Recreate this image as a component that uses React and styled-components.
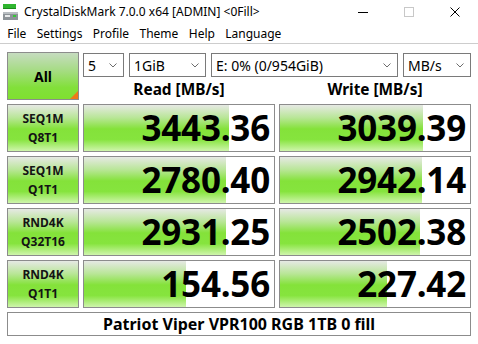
import React from "react"
import styled, { createGlobalStyle } from "styled-components"

const GlobalStyle = createGlobalStyle`
  html, body {
    margin: 0;
    padding: 0;
    background: #fff;
  }
  body {
    font-family: "Noto Sans", "Open Sans", sans-serif;
    color: #000;
  }
`

const Window = styled.div`
  width: 478px;
  height: 344px;
  background: #fff;
  overflow: hidden;
`
const TitleBar = styled.div`
  display: flex;
  align-items: center;
  height: 23px;
  padding-left: 3px;
  font-size: 12px;
`
const Title = styled.span`
  margin-left: 4px;
  white-space: nowrap;
`
const Controls = styled.div`
  display: flex;
  height: 100%;
  margin-left: auto;
`
const ControlButton = styled.div`
  display: flex;
  align-items: center;
  justify-content: center;
  width: 46px;
  height: 100%;
`
const MenuBar = styled.div`
  display: flex;
  align-items: center;
  height: 20px;
  padding-left: 2px;
  font-size: 12px;
  border-bottom: 1px solid #cdcdcd;
`
const MenuItem = styled.span`
  padding: 0 5.2px;
`
const Main = styled.div`
  display: grid;
  grid-template-columns: 72px 192px 192px;
  grid-template-rows: 48px repeat(4, 48px) 24px;
  gap: 4px;
  padding: 8px 7px 0;
`
const greenFace = `linear-gradient(to bottom, #e6e9e4 0%, #b8e696 28%, #84e23a 52%, #86e43e 75%, #cff5ac 100%)`

const AllButton = styled.div`
  display: flex;
  align-items: center;
  justify-content: center;
  position: relative;
  box-sizing: border-box;
  border: 1px solid #8c8c8c;
  background: linear-gradient(to bottom, #c6dcc0 0%, #a4dc80 40%, #82e03a 75%, #7fe030 100%);
  font-weight: 700;
  font-size: 14px;
  overflow: hidden;

  &::after {
    content: "";
    position: absolute;
    right: 0;
    bottom: 0;
    border-style: solid;
    border-width: 0 0 8px 8px;
    border-color: transparent transparent #f07818 transparent;
  }
`
const TopPanel = styled.div`
  grid-column: 2 / 4;
  display: flex;
  flex-direction: column;
`
const ComboRow = styled.div`
  display: grid;
  grid-template-columns: 41px 77px 187px 68px;
  justify-content: space-between;
  height: 24px;
  margin-top: 1px;
`
const Combo = styled.div`
  display: flex;
  align-items: center;
  box-sizing: border-box;
  border: 1px solid #7a7a7a;
  padding: 0 6px 0 4px;
  font-size: 14px;
  background: #fff;
`
const ComboText = styled.span`
  flex: 1;
  white-space: nowrap;
`
const Headers = styled.div`
  display: grid;
  grid-template-columns: 192px 192px;
  gap: 4px;
  flex: 1;
`
const Header = styled.div`
  display: flex;
  align-items: flex-end;
  justify-content: center;
  font-weight: 700;
  font-size: 15.4px;
  line-height: 20px;
`
const Label = styled.div`
  display: flex;
  flex-direction: column;
  align-items: center;
  justify-content: center;
  box-sizing: border-box;
  border: 1px solid #8c8c8c;
  background: ${greenFace};
  font-weight: 700;
  font-size: 12px;
  line-height: 19px;
  color: #141414;
`
const Score = styled.div`
  display: flex;
  align-items: center;
  justify-content: flex-end;
  box-sizing: border-box;
  border: 1px solid #8c8c8c;
  padding-right: 4px;
  background-color: #fff;
  background-image: ${greenFace};
  background-repeat: no-repeat;
  font-weight: 700;
  font-size: 35px;
  line-height: 46px;
  letter-spacing: -0.2px;
`
const Comment = styled.div`
  grid-column: 1 / 4;
  display: flex;
  align-items: center;
  justify-content: center;
  box-sizing: border-box;
  border: 1px solid #8c8c8c;
  font-weight: 700;
  font-size: 16px;
`

const Chevron = () => (
  <svg width="8" height="5" viewBox="0 0 8 5">
    <polyline points="0.5,0.5 4,4 7.5,0.5" fill="none" stroke="#6d6d6d" strokeWidth="1" />
  </svg>
)

const AppIcon = () => (
  <svg width="17" height="18" viewBox="0 0 17 18">
    <rect x="0" y="1" width="13" height="5" fill="#2fb52f" />
    <rect x="0" y="5" width="13" height="1" fill="#1d8a1d" />
    <rect x="0" y="9" width="15" height="8" fill="#8d9398" />
    <rect x="0" y="9" width="15" height="2" fill="#b9bec2" />
    <rect x="2" y="12" width="5" height="2" fill="#e8eaeb" />
    <rect x="10" y="12" width="3" height="2" fill="#36c436" />
  </svg>
)

const rows = [
  { top: "SEQ1M", bottom: "Q8T1", read: "3443.36", readFill: 145, write: "3039.39", writeFill: 143 },
  { top: "SEQ1M", bottom: "Q1T1", read: "2780.40", readFill: 142, write: "2942.14", writeFill: 142 },
  { top: "RND4K", bottom: "Q32T16", read: "2931.25", readFill: 142, write: "2502.38", writeFill: 140 },
  { top: "RND4K", bottom: "Q1T1", read: "154.56", readFill: 102, write: "227.42", writeFill: 107 },
]

const App = () => {
  return (
    <Window>
      <GlobalStyle />
      <TitleBar>
        <AppIcon />
        <Title>CrystalDiskMark 7.0.0 x64 [ADMIN] &lt;0Fill&gt;</Title>
        <Controls>
          <ControlButton>
            <svg width="10" height="10" viewBox="0 0 10 10">
              <line x1="0" y1="5.5" x2="10" y2="5.5" stroke="#000" strokeWidth="1" />
            </svg>
          </ControlButton>
          <ControlButton>
            <svg width="10" height="10" viewBox="0 0 10 10">
              <rect x="0.5" y="0.5" width="9" height="9" fill="none" stroke="#c8c8c8" strokeWidth="1" />
            </svg>
          </ControlButton>
          <ControlButton>
            <svg width="10" height="10" viewBox="0 0 10 10">
              <path d="M0.5 0.5 L9.5 9.5 M9.5 0.5 L0.5 9.5" stroke="#000" strokeWidth="1" />
            </svg>
          </ControlButton>
        </Controls>
      </TitleBar>
      <MenuBar>
        <MenuItem>File</MenuItem>
        <MenuItem>Settings</MenuItem>
        <MenuItem>Profile</MenuItem>
        <MenuItem>Theme</MenuItem>
        <MenuItem>Help</MenuItem>
        <MenuItem>Language</MenuItem>
      </MenuBar>
      <Main>
        <AllButton>All</AllButton>
        <TopPanel>
          <ComboRow>
            <Combo><ComboText>5</ComboText><Chevron /></Combo>
            <Combo><ComboText>1GiB</ComboText><Chevron /></Combo>
            <Combo><ComboText>E: 0% (0/954GiB)</ComboText><Chevron /></Combo>
            <Combo><ComboText>MB/s</ComboText><Chevron /></Combo>
          </ComboRow>
          <Headers>
            <Header>Read [MB/s]</Header>
            <Header>Write [MB/s]</Header>
          </Headers>
        </TopPanel>
        {rows.map((r) => (
          <React.Fragment key={r.top + r.bottom}>
            <Label>
              <span>{r.top}</span>
              <span>{r.bottom}</span>
            </Label>
            <Score style={{ backgroundSize: `${r.readFill}px 100%` }}>{r.read}</Score>
            <Score style={{ backgroundSize: `${r.writeFill}px 100%` }}>{r.write}</Score>
          </React.Fragment>
        ))}
        <Comment>Patriot Viper VPR100 RGB 1TB 0 fill</Comment>
      </Main>
    </Window>
  )
}

export default App
